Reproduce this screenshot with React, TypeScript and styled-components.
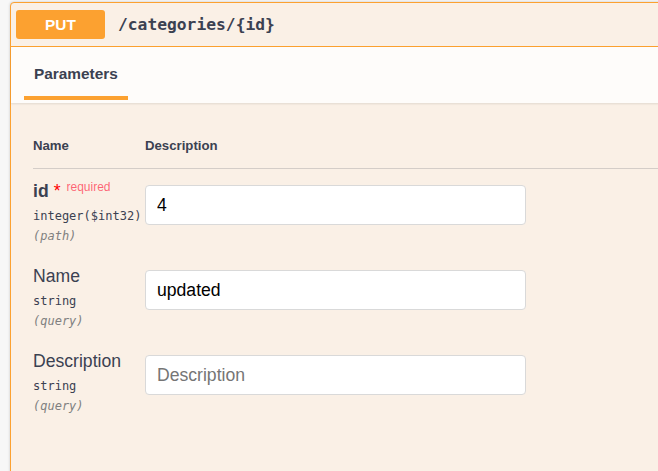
import React from "react";
import styled, { createGlobalStyle } from "styled-components";

const Global = createGlobalStyle`
  html, body {
    margin: 0;
    padding: 0;
    background: #f7f7f7;
    overflow: hidden;
  }
  body {
    font-family: "Liberation Sans", Arial, sans-serif;
    color: #3b4151;
  }
`;

const Page = styled.div`
  padding: 2px 0 0 10px;
`;

const OpBlock = styled.div`
  width: 900px;
  min-height: 500px;
  border: 1px solid #fca130;
  border-radius: 4px;
  background: #faf0e6;
  box-shadow: 0 0 3px rgba(0, 0, 0, 0.19);
`;

const Summary = styled.div`
  display: flex;
  align-items: center;
  gap: 13px;
  padding: 7px 5px;
  border-bottom: 1px solid #fca130;
`;

const MethodBadge = styled.span`
  display: flex;
  align-items: center;
  justify-content: center;
  width: 89px;
  height: 29px;
  border-radius: 3px;
  background: #fca130;
  color: #fff;
  font-weight: 700;
  font-size: 15.4px;
`;

const PathText = styled.span`
  font-family: "DejaVu Sans Mono", "Liberation Mono", monospace;
  font-weight: 700;
  font-size: 16.3px;
  color: #3b4151;
`;

const SectionHeader = styled.div`
  display: flex;
  padding: 18px 0 3px 13px;
  background: rgba(255, 255, 255, 0.8);
  box-shadow: 0 1px 2px rgba(0, 0, 0, 0.1);
`;

const TabLabel = styled.div`
  padding: 0 10px 13px;
  border-bottom: 4px solid #fca130;
  font-size: 15.4px;
  font-weight: 700;
  line-height: 18px;
  color: #3b4151;
`;

const Body = styled.div`
  padding: 0 0 0 22px;
`;

const HeadRow = styled.div`
  display: grid;
  grid-template-columns: 112px 1fr;
  padding: 36px 0 15px;
  border-bottom: 1px solid rgba(59, 65, 81, 0.2);
  font-size: 13.2px;
  font-weight: 700;
  line-height: 14px;
`;

const Rows = styled.div`
  display: flex;
  flex-direction: column;
  gap: 20px;
  padding-top: 10px;
`;

const Row = styled.div`
  display: grid;
  grid-template-columns: 112px 381px;
  align-items: start;
`;

const NameCol = styled.div`
  display: flex;
  flex-direction: column;
  padding-top: 2px;
`;

const ParamName = styled.div<{ $required?: boolean }>`
  height: 21px;
  font-size: 17.6px;
  line-height: 21px;
  font-weight: ${(p) => (p.$required ? 700 : 400)};
  color: #3b4151;
  white-space: nowrap;
`;

const Star = styled.span`
  color: red;
  font-weight: 400;
  margin-left: 5px;
`;

const Required = styled.span`
  position: relative;
  top: -6px;
  padding-left: 6px;
  font-size: 12px;
  line-height: 1;
  font-weight: 400;
  color: rgba(255, 0, 40, 0.6);
`;

const ParamType = styled.div`
  margin-top: 6px;
  font-family: "DejaVu Sans Mono", "Liberation Mono", monospace;
  font-size: 12px;
  line-height: 16px;
  color: #3b4151;
  white-space: nowrap;
`;

const ParamIn = styled.div`
  margin-top: 4px;
  font-family: "DejaVu Sans Mono", "Liberation Mono", monospace;
  font-style: italic;
  font-size: 12px;
  line-height: 16px;
  color: #808080;
`;

const TextInput = styled.input`
  box-sizing: border-box;
  margin-top: 6px;
  width: 381px;
  height: 40px;
  padding: 0 11px;
  border: 1px solid #d9d9d9;
  border-radius: 4px;
  background: #fff;
  font-family: "Liberation Sans", Arial, sans-serif;
  font-size: 17.6px;
  color: #000;
  outline: none;
  &::placeholder {
    color: #757575;
  }
`;

type Param = {
  name: string;
  type: string;
  location: string;
  value: string;
  required?: boolean;
};

const params: Param[] = [
  { name: "id", type: "integer($int32)", location: "(path)", value: "4", required: true },
  { name: "Name", type: "string", location: "(query)", value: "updated" },
  { name: "Description", type: "string", location: "(query)", value: "" },
];

export default function App() {
  return (
    <>
      <Global />
      <Page>
        <OpBlock>
          <Summary>
            <MethodBadge>PUT</MethodBadge>
            <PathText>/categories/{"{id}"}</PathText>
          </Summary>
          <SectionHeader>
            <TabLabel>Parameters</TabLabel>
          </SectionHeader>
          <Body>
            <HeadRow>
              <span>Name</span>
              <span>Description</span>
            </HeadRow>
            <Rows>
              {params.map((p) => (
                <Row key={p.name}>
                  <NameCol>
                    <ParamName $required={p.required}>
                      {p.name}
                      {p.required && (
                        <>
                          <Star>*</Star>
                          <Required>required</Required>
                        </>
                      )}
                    </ParamName>
                    <ParamType>{p.type}</ParamType>
                    <ParamIn>{p.location}</ParamIn>
                  </NameCol>
                  <TextInput
                    type="text"
                    defaultValue={p.value}
                    placeholder={p.name}
                  />
                </Row>
              ))}
            </Rows>
          </Body>
        </OpBlock>
      </Page>
    </>
  );
}
